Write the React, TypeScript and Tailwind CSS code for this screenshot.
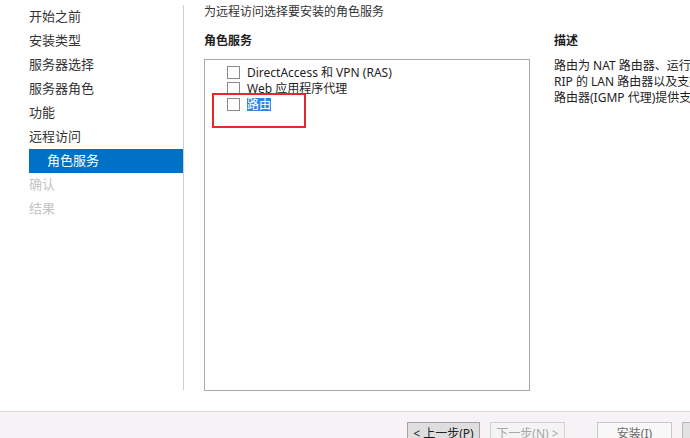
import React from "react";

const navItems: { label: string; state: "done" | "active" | "disabled" }[] = [
  { label: "开始之前", state: "done" },
  { label: "安装类型", state: "done" },
  { label: "服务器选择", state: "done" },
  { label: "服务器角色", state: "done" },
  { label: "功能", state: "done" },
  { label: "远程访问", state: "done" },
  { label: "角色服务", state: "active" },
  { label: "确认", state: "disabled" },
  { label: "结果", state: "disabled" },
];

const services = [
  { label: "DirectAccess 和 VPN (RAS)" },
  { label: "Web 应用程序代理" },
  { label: "路由", selected: true },
];

function Checkbox() {
  return <span className="w-[13px] h-[13px] border border-[#8a8a8a] bg-white shrink-0" />;
}

export default function App() {
  return (
    <div
      className="w-[690px] h-[438px] overflow-hidden bg-white flex flex-col text-[#1e1e1e]"
      style={{ fontFamily: '"Noto Sans", "Noto Sans CJK SC", sans-serif' }}
    >
      {/* Main area */}
      <div className="h-[411px] flex shrink-0">
        {/* Wizard steps */}
        <div className="w-[183px] pl-[29px] pt-[5px] shrink-0">
          {navItems.map((item) => (
            <div
              key={item.label}
              className={`h-6 flex items-center text-[13px] ${
                item.state === "active"
                  ? "bg-[#0072c6] text-white pl-[18px]"
                  : item.state === "disabled"
                  ? "text-[#c4c4c4]"
                  : "text-[#333333]"
              }`}
            >
              {item.label}
            </div>
          ))}
        </div>
        <div className="w-px bg-[#cfcfcf] mt-[5px] mb-[21px] shrink-0" />

        {/* Content */}
        <div className="flex-1 pl-5 pt-1 min-w-0">
          <div className="h-4 leading-4 text-[12px] text-[#333333]">为远程访问选择要安装的角色服务</div>

          <div className="flex gap-6 mt-[13px]">
            <div className="w-[326px] shrink-0">
              <div className="h-4 leading-4 text-[12px] font-bold">角色服务</div>
              <div className="relative mt-[10px] h-[332px] border border-[#a9a9a9] pt-1 pl-[22px]">
                {services.map((s) => (
                  <div key={s.label} className="h-4 flex items-center gap-[7px]">
                    <Checkbox />
                    <span
                      className={`text-[12px] leading-[13px] whitespace-nowrap ${
                        s.selected ? "bg-[#2f86e0] text-white" : "text-[#1e1e1e]"
                      }`}
                    >
                      {s.label}
                    </span>
                  </div>
                ))}
                {/* annotation frame */}
                <div className="absolute left-[7px] top-[33px] w-[94px] h-[35px] border-2 border-[#e8262b]" />
              </div>
            </div>

            <div className="flex-1 min-w-0 overflow-hidden">
              <div className="h-4 leading-4 text-[12px] font-bold">描述</div>
              <div className="mt-[9px] text-[12px] leading-4 text-[#1e1e1e] whitespace-nowrap">
                <div>路由为 NAT 路由器、运行 BGP 的 LAN 路由器</div>
                <div>RIP 的 LAN 路由器以及支持多播的</div>
                <div>路由器(IGMP 代理)提供支持。</div>
              </div>
            </div>
          </div>
        </div>
      </div>

      {/* Bottom button bar */}
      <div className="flex-1 border-t border-[#d9d9d9] bg-[#f6f2f6] pt-[10px] flex text-[12px] overflow-hidden">
        <button className="ml-[407px] w-[73px] h-[23px] shrink-0 whitespace-nowrap border border-[#a3a3a3] bg-[#dedede] text-[#222222] flex items-center justify-center">
          &lt; 上一步(P)
        </button>
        <button className="ml-[10px] w-[75px] h-[23px] shrink-0 whitespace-nowrap border border-[#d2d2d2] bg-[#f4f4f4] text-[#a8a8a8] flex items-center justify-center">
          下一步(N) &gt;
        </button>
        <button className="ml-[32px] w-[75px] h-[23px] shrink-0 whitespace-nowrap border border-[#c9c9c9] bg-[#f8f8f8] text-[#6a6a6a] flex items-center justify-center">
          安装(I)
        </button>
        <button className="ml-[10px] w-[75px] h-[23px] shrink-0 border border-[#b9b9b9] bg-[#e2e2e2]" />
      </div>
    </div>
  );
}
